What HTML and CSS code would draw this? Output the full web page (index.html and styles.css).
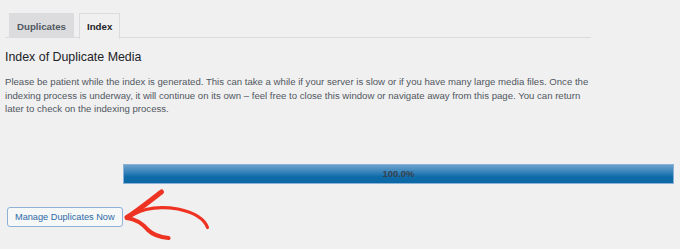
FILE: index.html
```html
<!DOCTYPE html>
<html lang="en">
<head>
<meta charset="utf-8">
<title>Index of Duplicate Media</title>
<link rel="stylesheet" href="styles.css">
</head>
<body>
<div class="page">
  <nav class="tabs">
    <a class="tab" href="#">Duplicates</a>
    <a class="tab tab-active" href="#">Index</a>
  </nav>
  <h2 class="title">Index of Duplicate Media</h2>
  <p class="intro">Please be patient while the index is generated. This can take a while if your server is slow or if you have many large media files. Once the indexing process is underway, it will continue on its own – feel free to close this window or navigate away from this page. You can return later to check on the indexing process.</p>
  <div class="progress">
    <div class="progress-fill" style="width: 100%"></div>
    <span class="progress-label">100.0%</span>
  </div>
  <div class="actions">
    <button class="button" type="button">Manage Duplicates Now</button>
    <svg class="arrow" width="100" height="60" viewBox="0 0 100 60" aria-hidden="true">
      <path d="M7 31.5 C 16 26, 27 17, 41.5 6" fill="none" stroke="#ee3322" stroke-width="5" stroke-linecap="round"/>
      <path d="M7 32 C 15 33, 22 37, 28 44 C 32 48, 39 51, 48.5 52" fill="none" stroke="#ee3322" stroke-width="4.2" stroke-linecap="round"/>
      <path d="M12 29 C 24 22, 40 20, 58 23 C 72 26, 84 32, 87.5 41.5" fill="none" stroke="#ee3322" stroke-width="3.2" stroke-linecap="round"/>
    </svg>
  </div>
</div>
</body>
</html>
```

FILE: styles.css
```css
* {
  box-sizing: border-box;
}

html, body {
  margin: 0;
  padding: 0;
  background: #f0f0f1;
}

body {
  font-family: "Liberation Sans", Arial, sans-serif;
  color: #1d2327;
  width: 680px;
  height: 249px;
  overflow: hidden;
}

.page {
  padding: 13px 0 0 5px;
}

.tabs {
  display: flex;
  gap: 5px;
  width: 586px;
  height: 25px;
  padding-left: 4px;
  border-bottom: 1px solid #dcdcde;
}

.tab {
  display: flex;
  align-items: center;
  height: 25px;
  padding: 0 7px;
  border: 1px solid #dcdcde;
  border-bottom: none;
  background: #dcdcde;
  color: #50575e;
  font-size: 9.7px;
  font-weight: 700;
  text-decoration: none;
}

.tab-active {
  background: #f0f0f1;
  color: #1d2327;
  margin-bottom: -1px;
  height: 26px;
}

.title {
  margin: 11px 0 0;
  font-size: 12.4px;
  font-weight: 400;
  line-height: 16px;
  color: #1d2327;
}

.intro {
  margin: 10px 0 0;
  width: 588px;
  font-size: 9.6px;
  line-height: 13.5px;
  color: #50575e;
}

.progress {
  position: relative;
  margin: 48px 0 0 118px;
  width: 551px;
  height: 20px;
  border: 1px solid #8ab2d6;
  background: #f0f0f1;
  display: flex;
  align-items: center;
  justify-content: center;
}

.progress-fill {
  position: absolute;
  left: 0;
  top: 0;
  bottom: 0;
  background: linear-gradient(#6ba1cc 0%, #3d87bd 35%, #0f6ca9 65%, #0b68a5 100%);
}

.progress-label {
  position: relative;
  font-size: 9.4px;
  font-weight: 700;
  color: #37414b;
}

.actions {
  position: relative;
  margin-top: 22px;
  padding-left: 2px;
  height: 30px;
}

.button {
  display: inline-flex;
  align-items: center;
  height: 20px;
  padding: 0 7px;
  border: 1px solid #8fb1d6;
  border-radius: 3px;
  background: #f6f7f7;
  color: #2c6aa8;
  font-family: "Liberation Sans", Arial, sans-serif;
  font-size: 9.2px;
  cursor: pointer;
}

.arrow {
  position: absolute;
  left: 115px;
  top: -20px;
}
```
